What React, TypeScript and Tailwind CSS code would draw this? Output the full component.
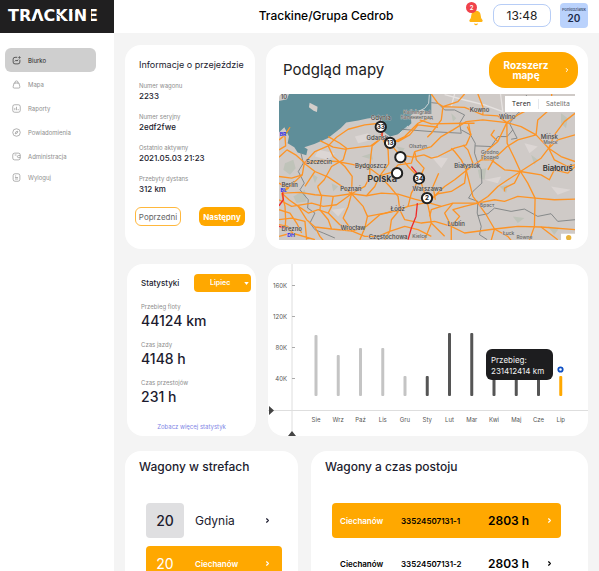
import { Bell, ChevronRight } from 'lucide-react';
import type { ReactNode } from 'react';

const navItems = [
  { label: 'Biurko', icon: 'activity', active: true },
  { label: 'Mapa', icon: 'bag' },
  { label: 'Raporty', icon: 'chart' },
  { label: 'Powiadomienia', icon: 'compass' },
  { label: 'Administracja', icon: 'wallet' },
  { label: 'Wyloguj', icon: 'document' },
];

const icons: Record<string, ReactNode> = {
  activity: (
    <>
      <path d="M14 3.5H8a5 5 0 0 0-5 5V16a5 5 0 0 0 5 5h8a5 5 0 0 0 5-5v-6" />
      <path d="m7.5 14.5 3-3.5 3 2.5 3-4" />
      <circle cx="20" cy="4" r="1.8" />
    </>
  ),
  bag: (
    <>
      <path d="M5.5 8h13L21 18a3 3 0 0 1-3 3.5H6A3 3 0 0 1 3 18Z" />
      <path d="M8 9.5v-3a4 4 0 0 1 8 0v3" />
    </>
  ),
  chart: (
    <>
      <rect x="2" y="2" width="20" height="20" rx="5" />
      <path d="M7.5 10.500v6M12 7.5v9M16.500 13.500v3" />
    </>
  ),
  compass: (
    <>
      <circle cx="12" cy="12" r="10" />
      <path d="m15.500 8.500-1.500 5-5.500 2 1.700-5.200Z" />
    </>
  ),
  wallet: (
    <>
      <rect x="2" y="3" width="20" height="18" rx="5" />
      <path d="M22 9.500h-5a2.700 2.700 0 0 0 0 5.400h5M7 8h5" />
    </>
  ),
  document: (
    <>
      <rect x="3" y="2" width="18" height="20" rx="5" />
      <path d="M8 8h3M8 12h8M8 16h8" />
    </>
  ),
};

const tripDetails = [
  { label: 'Numer wagonu', value: '2233' },
  { label: 'Numer seryjny', value: '2edf2fwe' },
  { label: 'Ostatnio aktywny', value: '2021.05.03 21:23' },
  { label: 'Przebyty dystans', value: '312 km' },
];

const stats = [
  { label: 'Przebieg floty', value: '44124 km' },
  { label: 'Czas jazdy', value: '4148 h' },
  { label: 'Czas przestojów', value: '231 h' },
];

const months = [
  { name: 'Sie', height: 61, color: '#c4c4c4' },
  { name: 'Wrz', height: 41, color: '#c4c4c4' },
  { name: 'Paź', height: 48, color: '#c4c4c4' },
  { name: 'Lis', height: 48, color: '#c4c4c4' },
  { name: 'Gru', height: 20, color: '#c4c4c4' },
  { name: 'Sty', height: 20, color: '#555555' },
  { name: 'Lut', height: 63, color: '#555555' },
  { name: 'Mar', height: 63, color: '#555555' },
  { name: 'Kwi', height: 30, color: '#555555' },
  { name: 'Maj', height: 30, color: '#555555' },
  { name: 'Cze', height: 30, color: '#555555' },
  { name: 'Lip', height: 20, color: '#ffa800' },
];

const roads = [
  'M42 300 60 285 75 262M42 330 62 318 60 290 45 278M42 352 66 330 92 345 118 368M118 370 150 335 190 318 215 292 250 268 300 255 345 250',
  'M118 370 170 362 215 365 255 372 315 385M118 370 112 405 85 430 52 458M118 370 150 395 190 412 232 440 260 462M190 318 205 350 240 380 262 410 260 462',
  'M165 302 205 322 240 328 285 322 318 318 350 295M190 290 225 310 245 325 235 360 200 380 178 420 158 440',
  'M50 460 105 458 150 465 205 470 260 462 305 468 350 460 400 463 450 478 488 488',
  'M50 460 72 480 100 500 125 540 150 562 200 568 262 574M50 460 60 500 62 540 60 575M42 480 80 500 140 490 175 500 215 495 260 462',
  'M260 462 250 500 235 535 262 574M260 462 295 500 308 530 300 565 285 600M260 462 300 440 315 412 315 385 318 350 322 318 350 295',
  'M315 385 345 408 380 398 400 375 440 370 450 335M345 408 375 440 400 470 405 510M350 295 376 312 405 345 445 352 478 345M345 408 330 440 305 468',
  'M350 250 352 295 370 330 372 372 345 408M376 312 420 290 460 250 500 230M350 295 400 305 435 285 460 255 520 262M405 345 430 380 465 415 488 485',
  'M405 510 430 500 488 488M405 510 380 540 375 575 360 600M262 574 305 560 345 525 405 510M262 574 300 590 340 590 375 575 420 560 460 570 500 590',
  'M262 574 225 555 190 520 160 510 130 520 100 500M42 540 80 535 120 545 125 600M42 510 75 520 95 550 110 580M42 590 80 580 150 600M150 562 165 590 175 602',
  'M158 440 170 470 165 510 190 540 200 568M120 440 150 395M42 410 80 415 112 405M42 430 70 445 52 458M42 555 68 560 90 590M205 470 200 500 190 520',
  'M308 530 360 520 405 510M405 510 420 540 470 550 510 545 560 560M430 500 440 460 465 415M488 488 495 520 500 550 480 600M500 550 540 590',
  'M488 488 530 500 565 490 640 490M488 488 540 440 570 420 605 392M488 488 520 462 560 455 600 430 605 392M512 480 505 440 522 400',
  'M450 335 500 320 530 290 565 270 605 245 655 240 727 248M450 335 455 360 478 385 465 415M478 345 500 355 520 350 570 325 605 315 618 285 612 250',
  'M500 162 520 190 535 200 580 185 600 162M535 200 530 240 500 280 488 292M535 200 600 202 655 225 700 228 727 248M465 240 500 252 600 250 630 250M640 162 655 200 655 225',
  'M605 392 590 360 570 335 560 325M605 392 625 370 610 330 595 315M605 392 650 360 670 330 700 305 727 248M605 392 615 430 625 470 640 490',
  'M727 248 728 310 750 355 768 395M727 248 770 260 815 285 853 325M727 248 760 225 810 200 835 170M728 320 760 300 815 285 820 240 860 205 862 162M728 320 690 355 670 390',
  'M853 325 880 300 932 285M853 325 890 350 932 365M853 325 870 285 900 245 932 220M853 325 830 355 768 395M853 325 870 360 910 380 932 375',
  'M768 395 720 390 680 360 650 360M768 395 730 420 700 440 670 470 640 490M768 395 790 430 812 475 810 560 795 602M768 395 830 405 855 420 870 390 910 400 932 380',
  'M640 490 690 480 720 485 760 470 812 475 870 480 932 478M640 490 665 525 690 568 680 602M640 490 600 500 565 510 585 530 560 560M560 560 600 580 690 568 760 560 830 562 932 570',
  'M560 560 560 602M565 490 540 520 560 560M690 568 730 590 740 602M830 562 880 600M530 500 500 510 495 530M768 395 750 430 720 445 720 455M700 305 680 285 690 270M620 285 608 260',
];

const borders = [
  'M108 340 115 370 100 395 118 430 105 450 130 480 128 505 150 520 135 550 150 570 175 580 210 595',
  'M500 275 590 280 585 250 600 225 570 210 540 210 520 190 500 188M410 268 500 275',
  'M590 270 618 285 632 310 630 340 640 370 650 390 652 430 625 455 612 475 640 485 638 520 650 560 645 585 668 600',
  'M632 318 680 320 700 290 728 290 745 270 735 250 760 220 800 190 785 165M745 270 758 295 740 298',
  'M640 528 670 522 690 505 740 515 780 508 820 530 860 522 880 545 932 540',
];

const cities = [
  { name: 'Gdynia', x: 348, y: 239 },
  { name: 'Gdańsk', x: 338, y: 299 },
  { name: 'Szczecin', x: 162, y: 372 },
  { name: 'Bydgoszcz', x: 318, y: 386 },
  { name: 'Poznań', x: 258, y: 453 },
  { name: 'Łódź', x: 399, y: 513 },
  { name: 'Wrocław', x: 264, y: 570 },
  { name: 'Warszawa', x: 488, y: 453 },
  { name: 'Częstochowa', x: 370, y: 597 },
  { name: 'Lublin', x: 575, y: 558 },
  { name: 'Białystok', x: 608, y: 385 },
  { name: 'Kowno', x: 645, y: 217 },
  { name: 'Wilno', x: 728, y: 238 },
  { name: 'Mińsk', x: 855, y: 296 },
  { name: 'Drezno', x: 80, y: 573 },
  { name: 'Berlin', x: 74, y: 441 },
];

const smallPlaces = [
  { name: 'Kaliningrad', x: 456, y: 222 },
  { name: 'Калининград', x: 456, y: 237 },
  { name: 'Olsztyn', x: 460, y: 325 },
  { name: 'Grodno', x: 676, y: 342 },
  { name: 'Гродно', x: 676, y: 357 },
  { name: 'Мінск', x: 858, y: 312 },
  { name: 'Брэст', x: 668, y: 501 },
  { name: 'Łuck', x: 732, y: 587 },
  { name: 'Równe', x: 780, y: 598 },
  { name: 'Kielce', x: 465, y: 595 },
];

const markers = [
  { label: '33', x: 348, y: 261 },
  { label: '13', x: 376, y: 309 },
  { label: '', x: 407, y: 352 },
  { label: '', x: 397, y: 400 },
  { label: '34', x: 463, y: 416 },
  { label: '2', x: 487, y: 475 },
];

// the wordmark has no crossbar in the A and no stem in the E
const Logo = () => (
  <svg viewBox="0 0 114 33" className="block h-[33px] w-full" role="img" aria-label="Trackine">
    <rect width="114" height="33" fill="#201f20" />
    <text x="8" y="21" fill="#fff" fontSize="16" fontWeight="700" fontFamily="DejaVu Sans, sans-serif">
      TRACKINE
    </text>
    <path d="m37.500 12.500-3 9h6ZM87 8h4v14h-4Z" fill="#201f20" />
    <path d="m77 8-5 4M57 14l4 3" stroke="#201f20" />
  </svg>
);

const Sidebar = () => (
  <aside className="w-[114px] shrink-0 bg-white">
    <Logo />
    <nav className="mt-[15px] flex flex-col pr-[18px] pl-[5px]">
      {navItems.map((item) => (
        <a
          key={item.label}
          href="#"
          className={`flex items-center gap-[7px] rounded-md pl-[7px] text-[6px] last:h-[18px] ${
            item.active ? 'h-6 bg-[#cfcfcf] text-[#222]' : 'h-6 text-[#8d8d8d]'
          }`}
        >
          <svg viewBox="0 0 24 24" className="size-[9px]" fill="none" stroke="currentColor" strokeWidth="1.8">
            {icons[item.icon]}
          </svg>
          {item.label}
        </a>
      ))}
    </nav>
  </aside>
);

const Header = () => (
  <header className="flex h-[33px] items-center bg-white pr-[11px]">
    <h1 className="flex-1 pb-0.5 pl-[70px] text-center text-[12px] font-medium text-black">Trackine/Grupa Cedrob</h1>
    <div className="flex items-center gap-[9px] pb-0.5">
      <button className="relative" aria-label="Powiadomienia">
        <Bell className="mt-1 size-4 fill-[#ffb413] text-[#ffb413]" />
        <span className="absolute -top-1 -left-0.5 flex size-[11px] items-center justify-center rounded-full bg-[#f0424a] text-[6px] font-semibold text-white">
          2
        </span>
      </button>
      <time className="flex h-[23px] w-[58px] items-center justify-center rounded-lg border border-[#b7cdf6] text-[12px] text-[#222]">
        13:48
      </time>
      <div className="flex h-[25px] w-7 flex-col items-center justify-center rounded-sm bg-[#bad2fc] text-[#1b2a4a]">
        <span className="text-[4px] leading-[5px]">Poniedziałek</span>
        <span className="text-[10px] leading-3 font-semibold">20</span>
      </div>
    </div>
  </header>
);

const TripCard = () => (
  <section className="rounded-2xl bg-white px-[14px] pt-[14px]">
    <h2 className="text-[9px] leading-3 whitespace-nowrap">Informacje o przejeździe</h2>
    <dl className="mt-[10px] flex flex-col gap-[11px]">
      {tripDetails.map((detail) => (
        <div key={detail.label}>
          <dt className="text-[6px] leading-[10px] text-[#8d8d8d]">{detail.label}</dt>
          <dd className="text-[8px] leading-[10px] font-medium">{detail.value}</dd>
        </div>
      ))}
    </dl>
    <div className="-mx-1 mt-[13px] flex justify-between">
      <button className="h-[19px] w-[46px] rounded-md border border-[#ffb83d] text-[8px] text-[#666]">Poprzedni</button>
      <button className="h-[19px] w-[46px] rounded-md bg-[#ffa800] text-[8px] font-bold text-white">Następny</button>
    </div>
  </section>
);

const PolandMap = () => (
  <svg viewBox="42 162 890 440" className="block w-full rounded-tl" role="img" aria-label="Mapa">
    <rect x="42" y="162" width="890" height="440" fill="#cfcac7" />
    <g fill="#bfc3b9">
      <path d="M60 370 85 360 92 385 75 405 55 390ZM85 470 120 450 125 485 95 490ZM140 400 158 412 150 430ZM200 430 220 440 205 455ZM395 320 420 325 410 340ZM290 350 320 340 325 360Z" />
      <path d="M640 390 665 385 660 420 645 415ZM890 220 910 235 905 265 890 250ZM705 440 730 435 725 460ZM800 345 820 360 810 375ZM560 220 575 235 565 245ZM850 560 885 565 870 585ZM745 530 780 535 760 550Z" />
    </g>
    <g fill="#dcd6d4">
      <path d="M160 330 210 340 190 360 150 350ZM270 290 310 280 320 300 280 310ZM200 510 240 505 220 530ZM500 350 550 355 530 385ZM780 310 820 320 795 340ZM660 420 710 410 700 430ZM860 440 920 450 880 465Z" />
    </g>
    <path
      d="M72 162 66 178 42 183V278L58 262 72 290 68 310 88 322 98 338 124 346 128 328 118 322 148 312 190 294 205 282 228 264 244 248 280 242 308 236 334 232 350 240 362 252 350 248 344 252 360 278 376 290 398 284 424 266 440 250 438 226 460 212 478 210 490 222H500V162Z"
      fill="#5f8e99"
    />
    <path d="M134 188 158 200 156 216 146 212 132 202Z" fill="#d3cecb" />
    <path d="M494 164 492 190 480 205 462 214M405 280 430 258" fill="none" stroke="#cfd6d7" strokeWidth="3" />
    <path d="M540 164 600 180 660 195 715 215 708 162M560 200 570 162" fill="none" stroke="#e6e2e0" strokeWidth="4" />
    <g fill="none" stroke="#777b7c" strokeWidth="2.5" strokeLinejoin="round">
      {borders.map((d) => (
        <path key={d} d={d} />
      ))}
    </g>
    <g fill="none" stroke="#fd9426" strokeWidth="4" strokeLinejoin="round">
      {roads.map((d) => (
        <path key={d} d={d} />
      ))}
    </g>
    <path
      d="M352 275 352 292 364 304M440 380 455 398 462 410M458 490 454 530 440 565 430 600M52 450 55 480 42 498M42 560 62 565"
      fill="none"
      stroke="#ee2b2b"
      strokeWidth="4"
    />
    <g fill="#444" fontSize="18" fontWeight="500" textAnchor="middle" stroke="#cfcac7" strokeWidth="2" paintOrder="stroke">
      {cities.map((city) => (
        <text key={city.name} x={city.x} y={city.y}>
          {city.name}
        </text>
      ))}
      <g fill="#666" fontSize="15">
        {smallPlaces.map((place) => (
          <text key={place.name} x={place.x} y={place.y}>
            {place.name}
          </text>
        ))}
      </g>
      <g fill="#333" fontWeight="600">
        <text x="352" y="427" fontSize="28">
          Polska
        </text>
        <text x="880" y="395" fontSize="23">
          Białoruś
        </text>
      </g>
      <g fill="#2626e8" fontSize="15" fontWeight="700">
        <text x="54" y="288">
          BR
        </text>
        <text x="56" y="458">
          BL
        </text>
        <text x="78" y="591">
          DH
        </text>
      </g>
      <text x="57" y="178">
        10
      </text>
    </g>
    {markers.map((marker) => (
      <g key={`${marker.x}-${marker.y}`}>
        <circle cx={marker.x} cy={marker.y} r="15.5" fill="#fff" stroke="#202020" strokeWidth="6" />
        <text x={marker.x} y={marker.y + 7} fontSize="19" fontWeight="700" textAnchor="middle" fill="#202020">
          {marker.label}
        </text>
      </g>
    ))}
    <path d="M890 582h42v20h-42Z" fill="#fff" />
    <circle cx="913" cy="594" r="8" fill="#e8b23a" />
  </svg>
);

const MapCard = () => (
  <section className="rounded-2xl bg-white pt-[7px] pr-[10px] pl-[13px]">
    <div className="flex items-center justify-between pl-1">
      <h2 className="text-[15px] text-[#222]">Podgląd mapy</h2>
      <button className="flex h-9 w-[89px] items-center rounded-2xl bg-[#ffa800] pr-2 pl-[14px] text-[10px] leading-[10px] font-bold text-white">
        <span className="w-[46px]">Rozszerz mapę</span>
        <ChevronRight className="ml-auto size-[6px]" strokeWidth={4} />
      </button>
    </div>
    <div className="relative mt-[6px] mr-[3px]">
      <PolandMap />
      <div className="absolute top-0.5 right-0 flex h-4 items-center divide-x divide-gray-200 bg-white font-['Open_Sans',sans-serif] text-[7px]">
        <button className="px-[7px] text-[#222]">Teren</button>
        <button className="pr-[5px] pl-[7px] text-[#666]">Satelita</button>
      </div>
    </div>
  </section>
);

const StatsCard = () => (
  <section className="flex flex-col rounded-2xl bg-white pt-[10px] pl-[14px]">
    <div className="flex items-center justify-between pr-[5px]">
      <h2 className="text-[8px] font-medium">Statystyki</h2>
      <div className="relative">
        <select
          aria-label="Miesiąc"
          className="block h-[18px] w-[57px] appearance-none rounded bg-[#ffa800] pl-4 text-[7px] font-semibold text-white"
        >
          <option>Lipiec</option>
        </select>
        <svg viewBox="0 0 6 4" className="pointer-events-none absolute top-2 right-0.5 h-[3px] w-[5px]" fill="#fff">
          <path d="M0 0h6L3 4Z" />
        </svg>
      </div>
    </div>
    <dl className="mt-[10px] flex flex-col gap-[10px]">
      {stats.map((stat) => (
        <div key={stat.label}>
          <dt className="text-[6px] leading-[10px] text-[#8d8d8d]">{stat.label}</dt>
          <dd className="text-[14px] leading-[18px] font-medium">{stat.value}</dd>
        </div>
      ))}
    </dl>
    <a href="#" className="mt-4 pr-[14px] text-center text-[6px] leading-[10px] text-[#7f86e6]">
      Zobacz więcej statystyk
    </a>
  </section>
);

const ChartCard = () => (
  <section className="overflow-hidden rounded-2xl bg-white">
    <svg viewBox="0 0 320 172" className="block w-full" role="img" aria-label="Przebieg w miesiącach">
      <path d="M24 0v172" stroke="#dedede" strokeWidth="1" />
      <path d="M0 146.5h320" stroke="#dedede" strokeWidth="1" />
      <path d="m1 142 5 4.500-5 4.500ZM20 172l4-5 4 5Z" fill="#444" />
      {['160K', '120K', '80K', '40K'].map((label, i) => (
        <g key={label}>
          <path d={`M24 ${21.5 + i * 31}h3`} stroke="#aaa" />
          <text x="19" y={23.5 + i * 31} fontSize="6" textAnchor="end" fill="#555">
            {label}
          </text>
        </g>
      ))}
      {months.map((month, i) => (
        <g key={month.name}>
          <rect x={46.5 + i * 22.25} y={132 - month.height} width="3" height={month.height} rx="1" fill={month.color} />
          <text x={48 + i * 22.25} y="158" fontSize="6" textAnchor="middle" fill="#555">
            {month.name}
          </text>
        </g>
      ))}
      <circle cx="292.5" cy="105.5" r="2.2" fill="#fff" stroke="#0d4fc4" strokeWidth="1.8" />
      <rect x="218" y="85" width="67" height="31" rx="6" fill="#1d1d1f" />
      <g fill="#f2f2f2" fontSize="8">
        <text x="223" y="99">
          Przebieg:
        </text>
        <text x="223" y="110">
          231412414 km
        </text>
      </g>
    </svg>
  </section>
);

const ZonesCard = () => (
  <section className="rounded-t-2xl bg-white pt-2">
    <h2 className="pl-[14px] text-[12px] leading-4 font-medium">Wagony w strefach</h2>
    <ul className="mt-7 flex flex-col gap-2 pr-4 pl-[21px]">
      <li className="flex h-[35px] items-center pr-[11px]">
        <span className="flex h-full w-[38px] items-center justify-center rounded bg-[#dfdfe1] text-[14px] font-medium">20</span>
        <span className="ml-[11px] text-[12px]">Gdynia</span>
        <ChevronRight className="ml-auto size-[7px]" strokeWidth={4} />
      </li>
      <li className="flex h-[35px] items-center rounded bg-[#ffa800] pr-[11px] text-white">
        <span className="w-[38px] text-center text-[14px]">20</span>
        <span className="ml-[11px] text-[8px] font-semibold">Ciechanów</span>
        <ChevronRight className="ml-auto size-[7px]" strokeWidth={4} />
      </li>
    </ul>
  </section>
);

const StopsCard = () => (
  <section className="rounded-t-2xl bg-white pt-2">
    <h2 className="pl-[14px] text-[12px] leading-4 font-medium">Wagony a czas postoju</h2>
    <table className="mt-7 ml-[21px] w-[calc(100%-48px)] table-fixed text-left font-semibold text-black">
      <tbody>
        <tr className="h-[35px] bg-[#ffa800]">
          <td className="w-[69px] rounded-l pl-2 text-[8px] text-white">Ciechanów</td>
          <td className="w-[87px] text-[8px]">33524507131-1</td>
          <td className="text-[12px]">2803 h</td>
          <td className="w-[15px] rounded-r text-white">
            <ChevronRight className="size-[7px]" strokeWidth={4} />
          </td>
        </tr>
        <tr className="h-2" />
        <tr className="h-[35px]">
          <td className="pl-2 text-[8px]">Ciechanów</td>
          <td className="text-[8px]">33524507131-2</td>
          <td className="text-[12px]">2803 h</td>
          <td>
            <ChevronRight className="size-[7px]" strokeWidth={4} />
          </td>
        </tr>
      </tbody>
    </table>
  </section>
);

const App = () => {
  return (
    <div className="flex h-screen overflow-hidden bg-[#f4f4f4] font-['Inter',sans-serif] text-[#1c1b2e]">
      <Sidebar />
      <div className="min-w-0 flex-1">
        <Header />
        <main className="flex flex-col gap-[15px] px-[11px] pt-3">
          <div className="grid min-h-[204px] grid-cols-[130px_1fr] gap-[11px]">
            <TripCard />
            <MapCard />
          </div>
          <div className="grid min-h-[172px] grid-cols-[129px_1fr] gap-3 pl-0.5">
            <StatsCard />
            <ChartCard />
          </div>
          <div className="grid min-h-[172px] grid-cols-[173px_1fr] gap-[13px]">
            <ZonesCard />
            <StopsCard />
          </div>
        </main>
      </div>
    </div>
  );
};

export default App;
